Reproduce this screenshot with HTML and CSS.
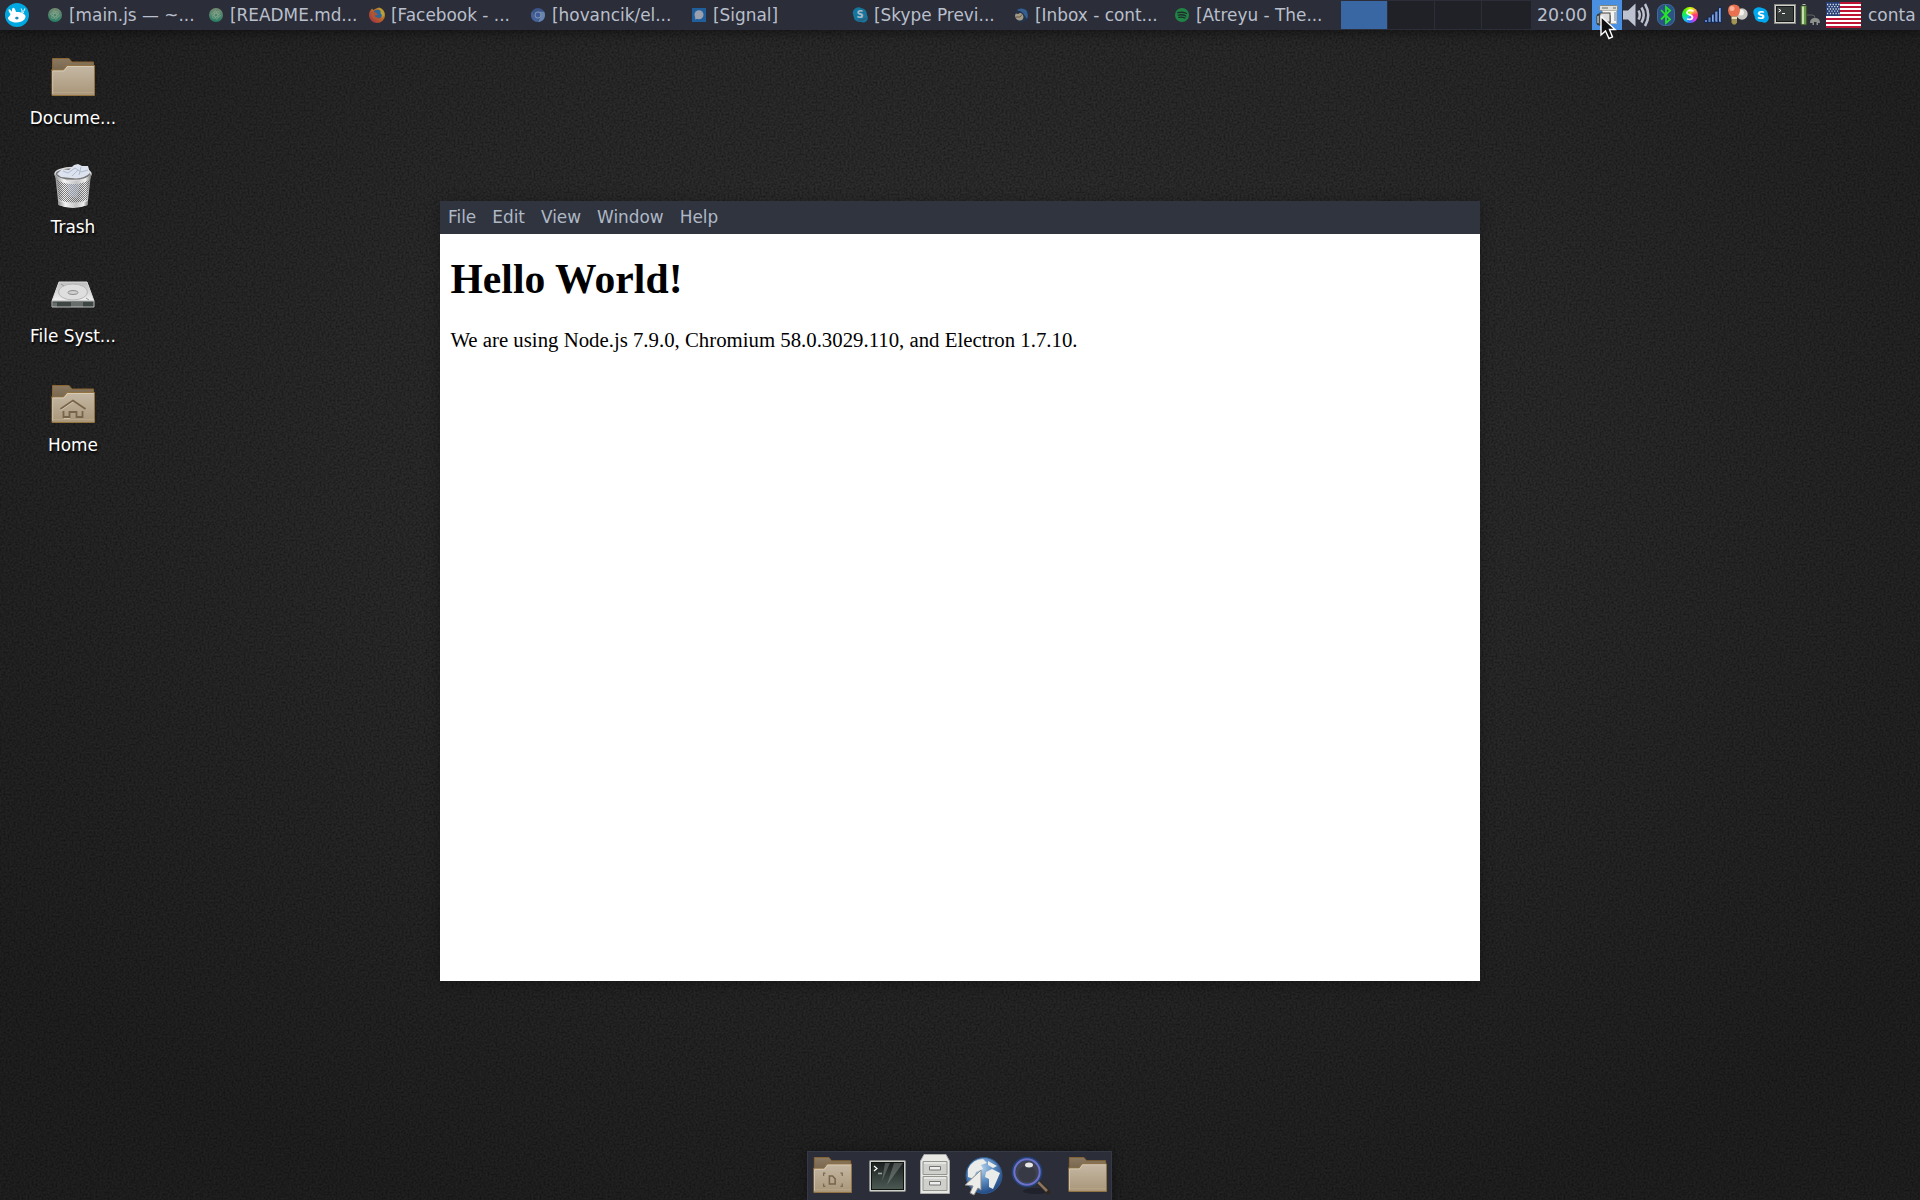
FILE: index.html
```html
<!DOCTYPE html>
<html lang="en">
<head>
<meta charset="utf-8">
<title>Desktop</title>
<link rel="stylesheet" href="styles.css">
</head>
<body>
<svg class="defs" width="0" height="0" aria-hidden="true">
  <defs>
    <linearGradient id="tan" x2="0" y2="1"><stop offset="0" stop-color="#c5b8a4"/><stop offset="1" stop-color="#a99679"/></linearGradient>
    <linearGradient id="tanback" x2="0" y2="1"><stop offset="0" stop-color="#8b7a60"/><stop offset="1" stop-color="#6b5a43"/></linearGradient>
    <linearGradient id="metal"><stop offset="0" stop-color="#8b8b8b"/><stop offset=".25" stop-color="#f4f4f4"/><stop offset=".6" stop-color="#c4c4c4"/><stop offset=".85" stop-color="#eee"/><stop offset="1" stop-color="#777"/></linearGradient>
    <linearGradient id="plate" x2="0" y2="1"><stop offset="0" stop-color="#bdbdbd"/><stop offset="1" stop-color="#f1f1f1"/></linearGradient>
    <linearGradient id="screen" x2="0" y2="1"><stop offset="0" stop-color="#1b201f"/><stop offset="1" stop-color="#4c5a54"/></linearGradient>
    <radialGradient id="ocean" cx=".4" cy=".3" r=".7"><stop offset="0" stop-color="#b9d4ec"/><stop offset=".5" stop-color="#5f8fc5"/><stop offset="1" stop-color="#234b85"/></radialGradient>
    <linearGradient id="fox" x1="1" y1="0" x2="0" y2="1"><stop offset="0" stop-color="#b9a52c"/><stop offset=".5" stop-color="#b9602b"/><stop offset="1" stop-color="#98254d"/></linearGradient>
    <linearGradient id="atomg" x2="0" y2="1"><stop offset="0" stop-color="#768c73"/><stop offset="1" stop-color="#287e65"/></linearGradient>
    <pattern id="mesh" width="2" height="2" patternUnits="userSpaceOnUse"><rect width="1" height="1" fill="#555"/><rect x="1" y="1" width="1" height="1" fill="#555"/></pattern>
    <symbol id="folder" viewBox="0 0 44 38">
      <path d="M1.5 20V.5H18L21 4H42.5V20Z" fill="url(#tanback)" stroke="#8a6532"/>
      <path d="M.5 12H12.500L16 7.500H43.500V37.500H1V12Z" fill="url(#tan)" stroke="#95733f"/>
      <path d="M1.700 36V13H13L16.500 8.500H42.500" fill="none" stroke="#dbd0be" opacity=".8"/>
      <path d="M2 34.500H43" stroke="#c4b294" opacity=".5"/>
    </symbol>
    <symbol id="atom" viewBox="0 0 14 14"><circle cx="7" cy="7" r="7" fill="url(#atomg)"/><g fill="none" stroke="#a5b8a2" stroke-width=".6" opacity=".7"><ellipse cx="7" cy="7" rx="4.500" ry="1.700" transform="rotate(15 7 7)"/><ellipse cx="7" cy="7" rx="4.500" ry="1.700" transform="rotate(75 7 7)"/><ellipse cx="7" cy="7" rx="4.500" ry="1.700" transform="rotate(135 7 7)"/></g></symbol>
  </defs>
</svg>
<svg class="grain" width="1920" height="1200" aria-hidden="true">
  <filter id="noise" x="0" y="0" width="100%" height="100%"><feTurbulence type="fractalNoise" baseFrequency=".5" numOctaves="2" seed="4" stitchTiles="stitch"/><feColorMatrix values="0 0 0 0 0  0 0 0 0 0  0 0 0 0 0  .8 0 0 0 -.27"/></filter>
  <rect width="1920" height="1200" filter="url(#noise)"/>
</svg>
<div class="desktop">
  <header class="panel">
    <div class="launcher">
      <svg width="24" height="24" viewBox="0 0 24 24"><circle cx="12" cy="12" r="12" fill="#00a8e1"/><path d="M5.500 11C2 6.500 3.500 4 7 8.800C6.500 4 9.500 3 11 9C15 8.500 20.500 10.500 20.500 13.300C20.500 16 18 19.500 11.500 19.500C6 19.500 3 17 3 15C3 13.800 5 13.500 5.500 11Z" fill="#fff"/><path d="M16 5.500l1.500 3M20 5.500l-1.500 3M16 9l3 .5" stroke="#d4f2fb" stroke-width="1.100"/><path d="M9.500 15l2.500-1.500 2 1.500-2 1.800z" fill="#178db7"/></svg>
    </div>
    <nav class="tasks">
      <div class="task"><svg class="ti"><use href="#atom"/></svg><span>[main.js — ~...</span></div>
      <div class="task"><svg class="ti"><use href="#atom"/></svg><span>[README.md...</span></div>
      <div class="task"><svg class="ti fox" viewBox="0 0 16 16"><path d="M1 4L3 1.500L4.500 3Q7 1 10 .5Q15.800 2 16 8.500A8 7.500 0 0 1 0 8.500Q0 5.500 1 4Z" fill="url(#fox)"/><circle cx="8.500" cy="7.300" r="4.500" fill="#2b659b"/><path d="M2.500 4.500L7 5.500L9 8L5.500 8.500Q7 11.500 11 10.500Q9 13.500 5 12.500Q1.500 10 2.500 4.500Z" fill="#b05432"/><path d="M9 1Q12.500 3 11.500 6.500Q14 7.500 12.500 11.500Q17 8 14 4Q12 1 9 1Z" fill="#bca135"/></svg><span>[Facebook - ...</span></div>
      <div class="task"><svg class="ti" viewBox="0 0 14 14"><circle cx="7" cy="7" r="7" fill="#3b5589"/><path d="M7 3.800H13.200A7 7 0 0 1 7 14L9.800 8.600Z" fill="#6783b0"/><path d="M1 3.500L4.200 8.600Q5.500 10.500 8 10L6 14A7 7 0 0 1 1 3.500Z" fill="#456399"/><circle cx="7" cy="7" r="3.400" fill="#8292b1"/><circle cx="7" cy="7" r="2.400" fill="#3d5a99"/></svg><span>[hovancik/el...</span></div>
      <div class="task"><svg class="ti" viewBox="0 0 14 14"><rect width="14" height="14" fill="#215f9c"/><circle cx="7" cy="6.700" r="4.500" fill="#9ba0ad"/><path d="M3.500 8.500L3 11.500L6 10.500Z" fill="#9ba0ad"/></svg><span>[Signal]</span></div>
      <div class="task"><svg class="ti fox" viewBox="0 0 16 16"><path d="M5 .5Q8 0 9 1Q15 2 15 8Q17 12 14 14.500Q12 16 9 15Q2 15 1.500 9Q-1 3 5 .5Z" fill="#16759d"/><text x="8" y="11.300" class="skypes">S</text><path d="M6 13Q11 14 14.500 11" stroke="#34546f" fill="none"/></svg><span>[Skype Previ...</span></div>
      <div class="task"><svg class="ti" viewBox="0 0 14 14"><circle cx="7.500" cy="7" r="7" fill="#223550"/><path d="M3 2Q7-1 12 2Q15 6 13 11L9 5Z" fill="#355f91"/><path d="M1 7Q2 4 5 4.500Q9 5 9.500 9Q9 13 5 12.500Q1 11 1 7Z" fill="#a29a84"/><path d="M2 9L6 9L8 6.500" stroke="#6a5642" fill="none"/><path d="M0 5Q4 2 8 4L4 6Z" fill="#2a3045"/></svg><span>[Inbox - cont...</span></div>
      <div class="task"><svg class="ti" viewBox="0 0 14 14"><circle cx="7" cy="7" r="7" fill="#218447"/><path d="M2.700 4.700Q7.500 3.500 11.500 5.500M3.200 7.200Q7.500 6 10.800 8M3.700 9.400Q7 8.500 10 10" fill="none" stroke="#202a2b" stroke-width="1.300" stroke-linecap="round"/></svg><span>[Atreyu - The...</span></div>
    </nav>
    <div class="pager"><i class="on"></i><i></i><i></i><i></i></div>
    <div class="clock">20:00</div>
    <div class="tray-active">
      <svg width="24" height="24" viewBox="0 0 24 24"><rect x="3.500" y="2.500" width="18" height="5" rx="1" fill="#deded9" stroke="#858680"/><path d="M6 5H12M17 5H20" stroke="#666"/><rect x="6.500" y="7.500" width="14" height="13" fill="#f5f5f1" stroke="#b5b5ae"/><path d="M19 9V18" stroke="#6a7e9c"/><rect x="1" y="11" width="13" height="11" rx="2" fill="#51554f" stroke="#2c302c"/><rect x="4" y="10" width="10" height="9" fill="#ddd" stroke="#444"/><path d="M2 13V20M7 12V16" stroke="#eee"/></svg>
    </div>
    <div class="tray">
      <svg class="vol" width="27" height="26" viewBox="0 0 27 26"><path d="M0 8.500H5L12.500 1.500V24.500L5 17.500H0Z" fill="#bcc2cf"/><path d="M15.500 8.500Q18 13 15.500 17.500M18.500 5.500Q23 13 18.500 20.500M22 2Q28.500 13 22 24" fill="none" stroke="#bcc2cf" stroke-width="2.500"/></svg>
      <svg class="bt" width="18" height="22" viewBox="0 0 18 22"><rect x=".5" y=".5" width="17" height="21" rx="7" fill="#2c5384" stroke="#3e6da3"/><path d="M4 6L13 15.500L9 19V3L13 6.500L4 15.500" fill="none" stroke="#25e52b" stroke-width="1.800"/></svg>
      <div class="wheel"><svg width="16" height="16" viewBox="0 0 16 16"><path d="M11.500 4Q6 2 5 5.500C4.500 8 10 7 10.500 10Q10 13.500 5 12" fill="none" stroke="#fff" stroke-width="1.800"/></svg></div>
      <svg class="net" width="18" height="16" viewBox="0 0 18 16"><g fill="#5c82c8" stroke="#0f2042" stroke-width=".8"><path d="M.5 12.500h3v3H.5zM4 10h3v5.500H4zM7.500 7h3v8.500H7.500zM11 4h3v11.500H11zM14.500.5h3v15H14.500z"/></g><path d="M15.500 1.500V14M12 5V14M8.500 8.500V14" stroke="#8ba9da"/></svg>
      <svg class="bulb" width="22" height="22" viewBox="0 0 22 22"><circle cx="15" cy="10" r="5.700" fill="#c8c7c1"/><circle cx="14" cy="8.500" r="3" fill="#f2f1ec"/><path d="M1 6.500Q1 .5 7 .5T13 6.500Q13 10 10 12.500H4Q1 10 1 6.500Z" fill="#e9714f"/><circle cx="5" cy="4.500" r="2.500" fill="#f9b09b"/><path d="M4.500 12.500h5.500v3h-5.500z" fill="#eee1ab"/><path d="M4.500 15.500h5.500v3l-1.500 2h-2.500l-1.500-2z" fill="#a59553"/></svg>
      <svg class="sk" width="16" height="16" viewBox="0 0 16 16"><path d="M5 .2Q8 0 9 1Q15 2 15 8Q17 12 14 14.700Q12 16.500 9 15Q2 15 1.500 9Q-2 2 5 .2Z" fill="#00a9ee"/><text x="8" y="12" class="skypew">S</text></svg>
      <svg class="term" width="22" height="20" viewBox="0 0 22 20"><rect x=".5" y=".5" width="21" height="19" fill="#d0d1cc" stroke="#888a85"/><rect x="2.500" y="2.500" width="17" height="15" fill="#363d3b" stroke="#171918"/><path d="M4.500 5L7 6.500L4.500 8M8 9.500H11" fill="none" stroke="#fff"/></svg>
      <svg class="bat" width="20" height="22" viewBox="0 0 20 22"><rect x="2.500" y="0" width="3" height="2" fill="#bbb"/><rect x=".8" y="1.500" width="6" height="19.500" rx="1" fill="#68984a" stroke="#333e2d"/><path d="M3 2.500V20" stroke="#c5e0ac" stroke-width="2"/><path d="M7 11H12Q15 11 15 14" fill="none" stroke="#606461"/><path d="M10 19Q10 14 15 14T20 19H18V21H16.500V18H14V21H12.500V19Z" fill="#8d918c"/></svg>
      <svg class="flag" width="35" height="26" viewBox="0 0 35 26"><rect width="35" height="26" fill="#fff"/><path d="M0 1H35M0 5H35M0 9H35M0 13H35M0 17H35M0 21H35M0 25H35" stroke="#bd1435" stroke-width="2"/><rect width="14" height="14" fill="#263e73"/><path d="M1 2.500H14M1 7H14M1 11.500H14" stroke="#dbe1ea" stroke-width="1.400" stroke-dasharray="1.300 1.500"/><path d="M2.500 4.700H13M2.500 9.200H13" stroke="#dbe1ea" stroke-width="1.200" stroke-dasharray="1.300 1.500"/></svg>
    </div>
    <div class="user">conta</div>
  </header>

  <aside class="icons">
    <div class="item"><svg width="44" height="38"><use href="#folder"/></svg><span>Docume...</span></div>
    <div class="item"><svg class="trash" width="38" height="46" viewBox="0 0 38 46"><path d="M1 11L4.500 42Q19 48 33.500 42L37 11Z" fill="url(#metal)"/><path d="M3 17L5 37Q19 42 33 37L35.500 17Z" fill="url(#mesh)" opacity=".75"/><path d="M13 19Q19 16 26 20L23 35L15 33Z" fill="#bdc6da" opacity=".45"/><ellipse cx="19" cy="11" rx="18" ry="6.500" fill="#777" stroke="#ddd" stroke-width="1.500"/><path d="M3 11L8 6L15 7L20 2L24 1L28 3L34 3L36 10Q29 17 17 15L7 14Z" fill="#dce3ee"/><path d="M9 8L14 10L21 5L27 9L34 7M18 13L24 7M27 4L25 12" stroke="#aebace" fill="none"/><path d="M1 11Q7 18 19 18T37 11V15Q31 21 19 21T1.500 15Z" fill="url(#metal)"/><path d="M4 38Q19 44 34 38L33.500 42Q19 47 4.500 42Z" fill="url(#metal)"/></svg><span>Trash</span></div>
    <div class="item"><svg class="drive" width="44" height="28" viewBox="0 0 44 28"><path d="M8 1H36L43 20H1Z" fill="url(#plate)" stroke="#ddd"/><path d="M1 20H43V26H1Z" fill="#3d4643" stroke="#bbb"/><path d="M2 21.500H6V26H2ZM20 21V26H32V21" fill="#c7cac8" opacity=".3"/><ellipse cx="22" cy="11" rx="14.500" ry="8" fill="#dedede" stroke="#b5b5b5"/><ellipse cx="22" cy="11.500" rx="5" ry="2" fill="#d0d0d0" stroke="#8c8c8c"/><path d="M10 3L13 5M35 17L38 19" stroke="#999"/></svg><span>File Syst...</span></div>
    <div class="item"><svg width="44" height="39" viewBox="0 0 44 38"><use href="#folder" width="44" height="38"/><path d="M9.500 24L22 15.500L34.500 24M12.500 26V32H18.500V27H25.500V32H31.500V26" fill="none" stroke="#77644b" stroke-width="1.800"/><path d="M9.500 25.500L22 17M13 33.500H19" stroke="#d6cab5" stroke-width=".8"/></svg><span>Home</span></div>
  </aside>

  <main class="window">
    <div class="menubar"><span>File</span><span>Edit</span><span>View</span><span>Window</span><span>Help</span></div>
    <section class="content">
      <h1>Hello World!</h1>
      <p>We are using Node.js 7.9.0, Chromium 58.0.3029.110, and Electron 1.7.10.</p>
    </section>
  </main>

  <footer class="dock">
    <svg class="d1" width="39" height="36" viewBox="0 0 44 38" preserveAspectRatio="none"><use href="#folder" width="44" height="38"/><path d="M12 20V17H14M31 17H33V20M12 28V31H14M31 31H33V28" fill="none" stroke="#7b684c" stroke-width="1.300"/><path d="M18.500 20H22L25 23V28.500H18.500Z" fill="none" stroke="#77644b" stroke-width="1.700"/></svg>
    <svg class="d2" width="37" height="33" viewBox="0 0 37 33"><rect x=".5" y=".5" width="36" height="31" rx="1" fill="#cdcfca" stroke="#888a85"/><rect x="2.500" y="2.500" width="32" height="27" fill="url(#screen)" stroke="#101312"/><path d="M16 3H21L13 21ZM25 3H34L18 25Z" fill="#a8b1ad" opacity=".35"/><path d="M5 6L8 8.500L5 11" fill="none" stroke="#fff" stroke-width="1.200"/><path d="M9 13.500H13" stroke="#9aa39e" stroke-width="1.600"/></svg>
    <svg class="d3" width="30" height="40" viewBox="0 0 30 40"><path d="M4 .5H26L29.500 7V39.500H.5V7Z" fill="#e7e7e4" stroke="#aaa"/><path d="M3 7.500H27V20.500H3ZM3 22.500H27V36.500H3Z" fill="#cfcfcb" stroke="#959590"/><path d="M4 9H26M4 24H26" stroke="#fafafa"/><path d="M9.500 12.500H20.500V16H9.500ZM9.500 27.500H20.500V31H9.500Z" fill="#eee" stroke="#747470"/></svg>
    <svg class="d4" width="39" height="40" viewBox="0 0 39 40"><circle cx="20" cy="19.500" r="18" fill="url(#ocean)" stroke="#31598f"/><path d="M4 13Q9 3 19 3L23 7L17 9L19 13L12 16L10 23L4 21ZM22 16L28 13L36 17L33 24L29 33L25 31L25 23L21 21ZM24 5L33 10L29 12L24 9Z" fill="#e9ece8"/><path d="M17 14L1 29L9 30L6 37L10 39L14 32L17 34Z" fill="#ecece9" stroke="#888"/></svg>
    <svg class="d5" width="40" height="39" viewBox="0 0 40 39"><ellipse cx="25" cy="35" rx="13" ry="3" fill="#151820" opacity=".55"/><path d="M27 26L37 36" stroke="#2f2822" stroke-width="5" stroke-linecap="round"/><path d="M27 26L36 35" stroke="#8a7561" stroke-width="2.500"/><circle cx="16" cy="16" r="13.300" fill="#414450" stroke="#22447d" stroke-width="4"/><circle cx="16" cy="16" r="12.700" fill="none" stroke="#7471c4" stroke-width="2"/><ellipse cx="16" cy="18" rx="9" ry="8" fill="#30333d" opacity=".6"/><ellipse cx="18" cy="9" rx="4" ry="2.500" fill="#e5e5e8"/></svg>
    <svg class="d6" width="39" height="35" viewBox="0 0 44 38" preserveAspectRatio="none"><use href="#folder" width="44" height="38"/></svg>
  </footer>

  <svg class="cursor" width="17" height="26" viewBox="0 0 17 26"><path d="M1 1.500V20L5.500 16L9 23.500L12.500 22L9.500 14.500H15Z" fill="#101010" stroke="#fff" stroke-width="1.400"/></svg>
</div>
</body>
</html>
```
FILE: styles.css
```css
* { box-sizing: border-box; }
html, body { margin: 0; width: 1920px; height: 1200px; overflow: hidden; }
body {
  position: relative;
  background: radial-gradient(ellipse 1250px 850px at 50% 35%, #313131 0%, #2a2a2a 50%, #202020 100%);
  font-family: "DejaVu Sans", sans-serif;
  font-size: 16.9px;
}
svg { display: block; flex: none; }
.defs, .grain { position: absolute; left: 0; top: 0; }
.desktop { position: relative; width: 1920px; height: 1200px; display: flex; flex-direction: column; }

.panel {
  display: flex; align-items: center; height: 30px; flex: none;
  background: #2b2e39; color: #b9bfcb; white-space: nowrap;
  box-shadow: 0 2px 12px rgba(0, 0, 0, .5);
}
.launcher { width: 47px; padding-left: 5px; }
.tasks { display: flex; width: 1294px; }
.task { width: 161px; display: flex; align-items: center; gap: 7px; padding-left: 1px; }
.ti { width: 14px; height: 14px; }
.ti.fox { width: 16px; height: 16px; margin: 0 -1px; }
.skypes, .skypew { font: bold 10px "DejaVu Sans", sans-serif; text-anchor: middle; fill: #a9b9c7; }
.skypew { font-size: 11px; fill: #fff; }
.pager { display: grid; grid-template-columns: 46px 46px 46px 49px; gap: 1px; height: 28px; width: 190px; }
.pager i { background: #202127; }
.pager .on { background: #3867a3; }
.clock { width: 61px; padding-left: 6px; font-size: 17.33px; }
.tray-active { width: 30px; height: 30px; background: #4a90e2; padding: 3px 0 0 4px; }
.tray { width: 244px; display: flex; align-items: center; padding-left: 1px; }
.bt { margin-left: 7px; }
.wheel {
  width: 16px; height: 16px; margin-left: 7px; border-radius: 50%;
  background: conic-gradient(#cf0, #ffb24a, #ff3670, #e33bee, #416cff, #19ccec, #0ceb6b, #4cf000, #cf0);
}
.net { margin-left: 6px; }
.bulb { margin-left: 5px; margin-top: -1px; }
.sk { margin-left: 4px; }
.term { margin-left: 5px; margin-top: -2px; }
.bat { margin-left: 4px; }
.flag { margin-left: 6px; }
.user { padding-left: 2px; font-size: 17px; }

.icons { width: 146px; padding-top: 26px; flex: none; display: flex; flex-direction: column; }
.item { height: 109px; display: flex; flex-direction: column; align-items: center; justify-content: flex-start; color: #fff; text-shadow: 1px 2px 2px #000; position: relative; }
.item svg { margin-top: 1px; height: 40px; }
.item span { margin-top: 11px; line-height: 20px; }
.item .trash { height: 46px; margin-top: -2px; }
.item .trash + span { margin-top: 8px; }
.item .drive { height: 28px; margin-top: 7px; }
.item .drive + span { margin-top: 17px; }

.window { position: absolute; left: 440px; top: 201px; width: 1040px; height: 780px; background: #fff; box-shadow: 0 3px 14px rgba(0, 0, 0, .3); }
.menubar { display: flex; gap: 16px; align-items: center; height: 33px; padding: 0 0 1px 8px; background: #2f343f; color: #afb8c5; }
.content { padding: 0 10.4px; font-family: "Liberation Serif", serif; font-size: 20.8px; color: #000; display: flow-root; }
.content h1 { font-size: 41.6px; margin: 21px 0 24.9px; line-height: 48px; letter-spacing: .06px; }
.content p { margin: 0; line-height: 24px; }

.dock { position: absolute; left: 807px; top: 1151px; width: 305px; height: 49px; background: #2b2e39; border: 1px solid #353945; border-bottom: 0; display: flex; align-items: flex-start; padding-left: 5px; box-shadow: 0 0 10px rgba(0, 0, 0, .35); }
.d1 { margin-top: 5px; }
.d2 { margin: 8px 0 0 17px; }
.d3 { margin: 2px 0 0 14px; }
.d4 { margin: 4px 0 0 14px; }
.d5 { margin: 4px 0 0 8px; }
.d6 { margin: 5px 0 0 17px; }
.cursor { position: absolute; left: 1600px; top: 15px; }
```
